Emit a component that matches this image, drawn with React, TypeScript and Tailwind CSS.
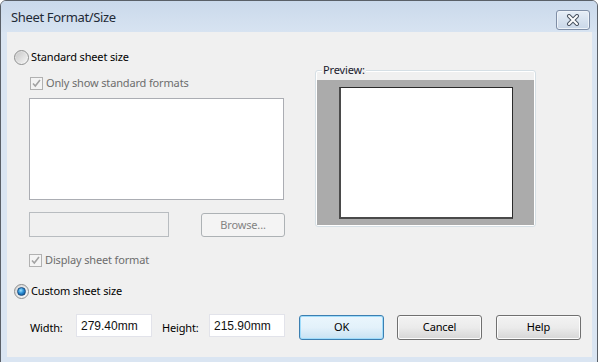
import React from "react";

const font = "font-['Noto_Sans','Segoe_UI',sans-serif]";

function Radio({ checked }: { checked?: boolean }) {
  return (
    <div className="w-[15px] h-[15px] rounded-full border border-[#8e8f8f] bg-gradient-to-br from-[#d5d5d5] to-[#fbfbfb] flex items-center justify-center shrink-0">
      {checked ? (
        <div className="w-[9px] h-[9px] rounded-full bg-[radial-gradient(circle_at_40%_35%,#9fe3ff_0%,#2b8fd6_45%,#0b3e78_100%)] border border-[#1e4f82]" />
      ) : (
        <div className="w-[11px] h-[11px] rounded-full bg-gradient-to-br from-[#c9c9c9] to-[#f4f4f4]" />
      )}
    </div>
  );
}

function DisabledCheck() {
  return (
    <div className="w-[13px] h-[13px] border border-[#b1b1b1] bg-[#f4f4f4] flex items-center justify-center shrink-0">
      <svg width="11" height="11" viewBox="0 0 11 11">
        <path d="M2 5.5 L4.3 8 L9 2" fill="none" stroke="#a3a3a3" strokeWidth="1.6" />
      </svg>
    </div>
  );
}

function Button({ label, focused }: { label: string; focused?: boolean }) {
  return (
    <div
      className={
        "w-[85px] h-[25px] rounded-[3px] border flex items-center justify-center text-black " +
        (focused
          ? "border-[#3c7fb1] bg-gradient-to-b from-[#eaf6fd] via-[#e3f1fa] to-[#c7e2f3] shadow-[inset_0_0_0_1px_#9fdcfb]"
          : "border-[#707070] bg-gradient-to-b from-[#f3f3f3] via-[#ebebeb] to-[#d6d6d6] shadow-[inset_0_0_0_1px_#fcfcfc]")
      }
    >
      {label}
    </div>
  );
}

export default function App() {
  return (
    <div className={"w-[600px] h-[362px] bg-white overflow-hidden " + font}>
      <div className="w-[598px] h-[370px] border border-[#5a6068] rounded-t-[6px] bg-[#dae5f2] flex flex-col overflow-hidden">
        {/* Title bar */}
        <div className="h-[31px] shrink-0 bg-gradient-to-b from-[#cad9eb] to-[#d7e3f1] flex items-center justify-between pl-[10px] pr-[7px]">
          <span className="text-[13px] tracking-[-0.35px] text-[#1f2a36] mt-[2px]">Sheet Format/Size</span>
          <div className="w-[34px] h-[20px] mt-[6px] rounded-[3px] border border-[#7f8ea6] bg-gradient-to-b from-[#e6eef7] to-[#c9d7e8] shadow-[inset_0_0_0_1px_#eef3f9] flex items-center justify-center">
            <svg width="14" height="12" viewBox="0 0 14 12">
              <path d="M3 2 L11 10 M11 2 L3 10" stroke="#4b5563" strokeWidth="4" strokeLinecap="round" />
              <path d="M3 2 L11 10 M11 2 L3 10" stroke="#ffffff" strokeWidth="2" strokeLinecap="round" />
            </svg>
          </div>
        </div>
        {/* Body */}
        <div className="ml-[6px] mr-[5px] h-[325px] shrink-0 bg-[#f0f0f0] flex flex-col text-[11px] tracking-[-0.15px] text-black">
          <div className="flex pt-[18px] pl-[7px]">
            {/* Left column */}
            <div className="w-[271px] flex flex-col">
              <div className="flex items-center h-[15px] gap-[2px]">
                <Radio />
                <span>Standard sheet size</span>
              </div>
              <div className="flex items-center h-[13px] mt-[12px] pl-[16px] gap-[3px] text-[#6d6d6d]">
                <DisabledCheck />
                <span>Only show standard formats</span>
              </div>
              <div className="mt-[8px] ml-[15px] w-[255px] h-[102px] bg-white border border-[#abadb3]" />
              <div className="flex mt-[12px] ml-[15px]">
                <div className="w-[140px] h-[25px] border border-[#b8bcc0] bg-[#f0f0f0]" />
                <div className="ml-[32px] mt-px w-[84px] h-[24px] rounded-[3px] border border-[#adb2b5] bg-[#f4f4f4] flex items-center justify-center text-[#838383]">
                  Browse...
                </div>
              </div>
              <div className="flex items-center h-[13px] mt-[17px] pl-[15px] gap-[3px] text-[#6d6d6d]">
                <DisabledCheck />
                <span>Display sheet format</span>
              </div>
              <div className="flex items-center h-[15px] mt-[17px] gap-[2px]">
                <Radio checked />
                <span>Custom sheet size</span>
              </div>
            </div>
            {/* Preview group */}
            <div className="ml-[30px] mt-[20px] w-[221px] h-[157px] relative rounded-[3px] border border-[#d5dfe5] shadow-[inset_0_0_0_1px_#ffffff]">
              <span className="absolute left-[6px] top-[-8px] px-px bg-[#f0f0f0] leading-[14px] text-[#1a1a2e]">Preview:</span>
              <div className="mt-[9px] ml-px w-[217px] h-[145px] bg-[#ababab] pt-[7px] pl-[22px]">
                <div className="w-[174px] h-[132px] bg-white border-t border-r border-[#2a2a2a] border-l-2 border-b-2 border-l-[#4a4a4a] border-b-[#4a4a4a]" />
              </div>
            </div>
          </div>
          {/* Bottom row */}
          <div className="flex items-start mt-[15px] pl-[23px]">
            <span className="w-[46px] mt-[6px]">Width:</span>
            <div className="w-[76px] h-[23px] bg-white border border-[#e2e3ea] flex items-center pl-[4px] font-['Liberation_Sans',sans-serif] text-[12px] tracking-normal text-[#111]">
              279.40mm
            </div>
            <span className="ml-[10px] w-[47px] mt-[6px]">Height:</span>
            <div className="w-[76px] h-[23px] bg-white border border-[#e2e3ea] flex items-center pl-[4px] font-['Liberation_Sans',sans-serif] text-[12px] tracking-normal text-[#111]">
              215.90mm
            </div>
            <div className="ml-[14px] mt-px flex gap-[13px]">
              <Button label="OK" focused />
              <Button label="Cancel" />
              <div className="ml-px">
                <Button label="Help" />
              </div>
            </div>
          </div>
        </div>
      </div>
    </div>
  );
}
